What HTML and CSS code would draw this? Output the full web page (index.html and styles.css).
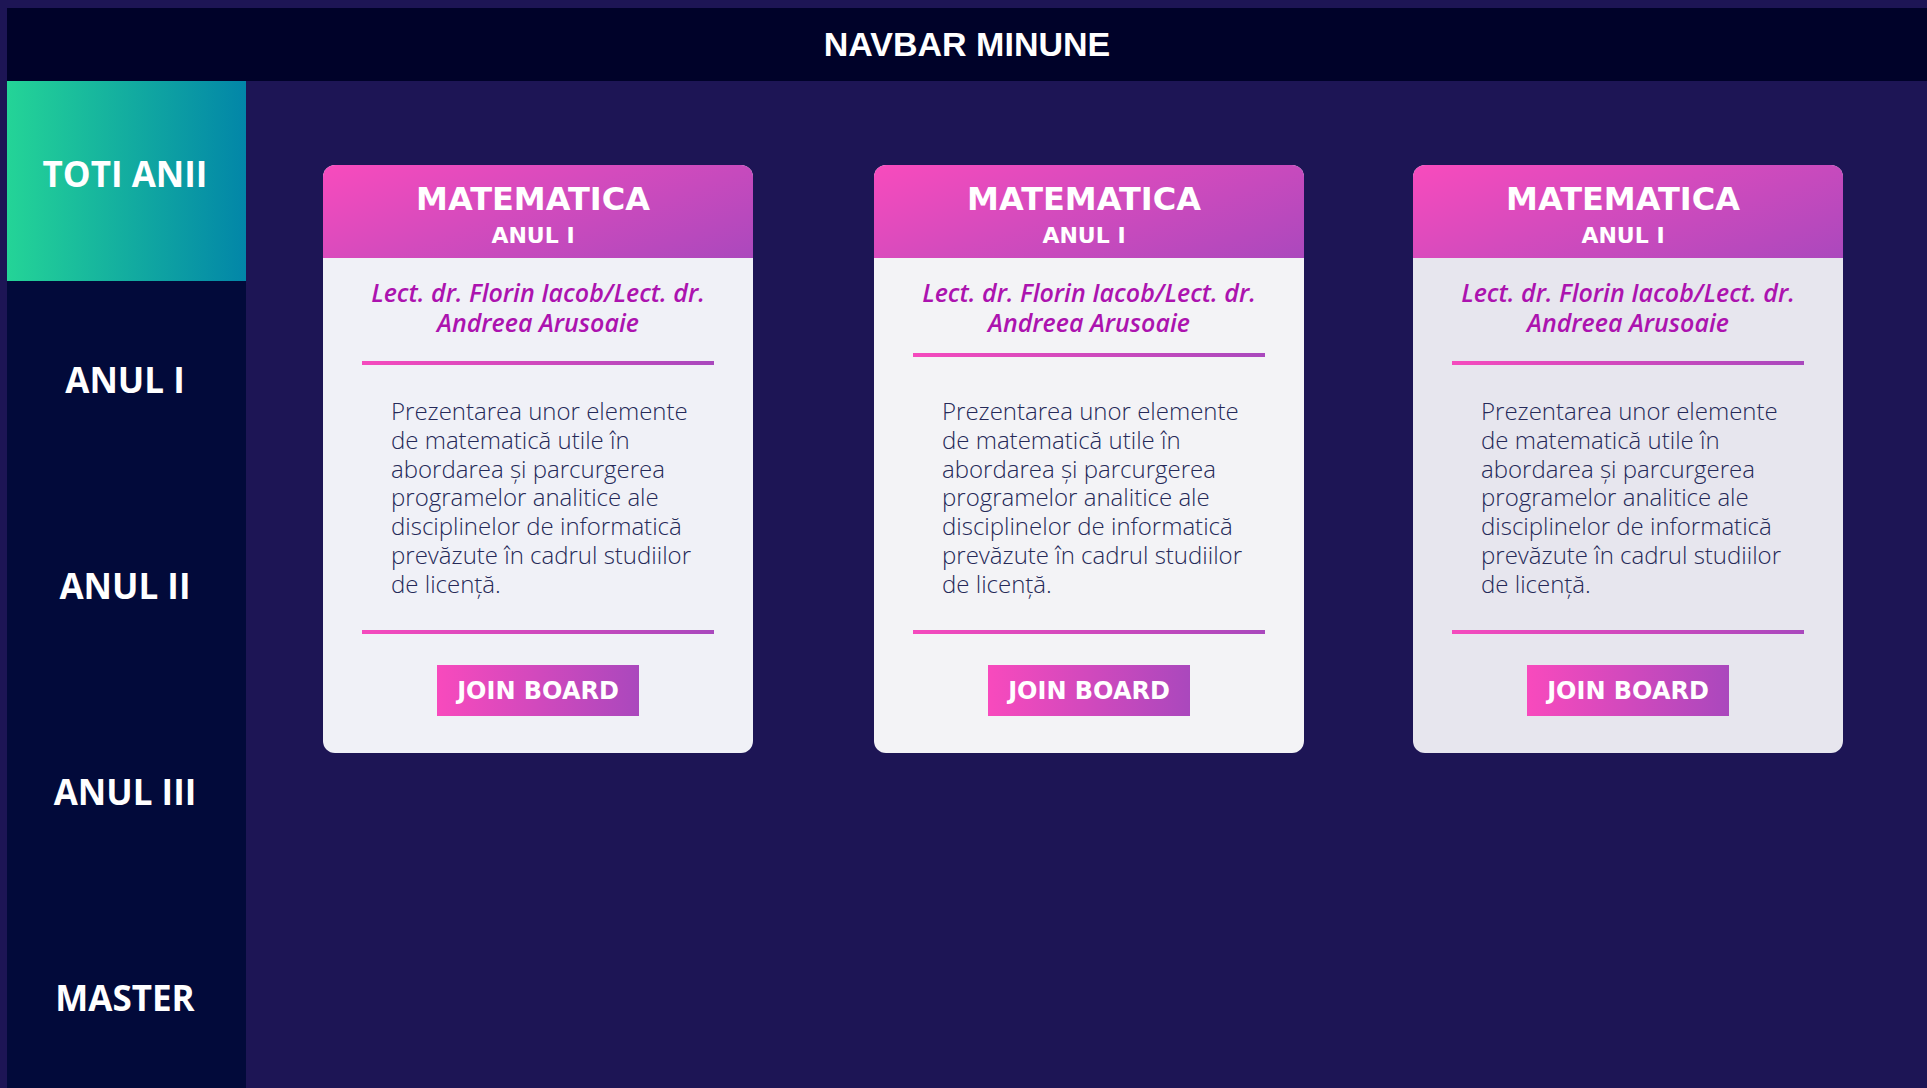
FILE: index.html
```html
<!DOCTYPE html>
<html lang="ro">
<head>
<meta charset="utf-8">
<title>Navbar Minune</title>
<link rel="stylesheet" href="styles.css">
</head>
<body>
<div class="page">
  <header class="navbar">NAVBAR MINUNE</header>
  <div class="layout">
    <nav class="sidebar">
      <a class="side-item active">TOTI ANII</a>
      <a class="side-item">ANUL I</a>
      <a class="side-item">ANUL II</a>
      <a class="side-item">ANUL III</a>
      <a class="side-item">MASTER</a>
    </nav>
    <main class="main">
      <article class="card card--light">
        <div class="card-head">
          <h2 class="card-title">MATEMATICA</h2>
          <h3 class="card-year">ANUL I</h3>
        </div>
        <p class="card-author">Lect. dr. Florin Iacob/Lect. dr. Andreea Arusoaie</p>
        <div class="divider divider--top"></div>
        <p class="card-desc">Prezentarea unor elemente de matematică utile în abordarea și parcurgerea programelor analitice ale disciplinelor de informatică prevăzute în cadrul studiilor de licență.</p>
        <div class="divider divider--bottom"></div>
        <button class="join-btn">JOIN BOARD</button>
      </article>
      <article class="card card--plain card--tight">
        <div class="card-head">
          <h2 class="card-title">MATEMATICA</h2>
          <h3 class="card-year">ANUL I</h3>
        </div>
        <p class="card-author">Lect. dr. Florin Iacob/Lect. dr. Andreea Arusoaie</p>
        <div class="divider divider--top"></div>
        <p class="card-desc">Prezentarea unor elemente de matematică utile în abordarea și parcurgerea programelor analitice ale disciplinelor de informatică prevăzute în cadrul studiilor de licență.</p>
        <div class="divider divider--bottom"></div>
        <button class="join-btn">JOIN BOARD</button>
      </article>
      <article class="card card--muted">
        <div class="card-head">
          <h2 class="card-title">MATEMATICA</h2>
          <h3 class="card-year">ANUL I</h3>
        </div>
        <p class="card-author">Lect. dr. Florin Iacob/Lect. dr. Andreea Arusoaie</p>
        <div class="divider divider--top"></div>
        <p class="card-desc">Prezentarea unor elemente de matematică utile în abordarea și parcurgerea programelor analitice ale disciplinelor de informatică prevăzute în cadrul studiilor de licență.</p>
        <div class="divider divider--bottom"></div>
        <button class="join-btn">JOIN BOARD</button>
      </article>
    </main>
  </div>
</div>
</body>
</html>
```

FILE: styles.css
```css
* {
  box-sizing: border-box;
}

html, body {
  margin: 0;
  padding: 0;
  background: #1d1555;
  overflow: hidden;
}

.page {
  padding: 8px 0 0 7px;
  height: 1088px;
  display: flex;
  flex-direction: column;
}

.navbar {
  height: 73px;
  flex: 0 0 73px;
  background: #000229;
  color: #ffffff;
  display: flex;
  align-items: center;
  justify-content: center;
  font-family: "Liberation Sans", Arial, sans-serif;
  font-weight: 700;
  font-size: 34px;
}

.layout {
  display: flex;
  flex: 1;
  min-height: 0;
}

.sidebar {
  width: 239px;
  flex: 0 0 239px;
  background: #020a3a;
  display: flex;
  flex-direction: column;
}

.side-item {
  height: 200px;
  flex: 0 0 200px;
  margin-bottom: 6px;
  padding: 0 3px 15px 0;
  display: flex;
  align-items: center;
  justify-content: center;
  color: #ffffff;
  font-family: "Open Sans", "Noto Sans", sans-serif;
  font-weight: 700;
  font-size: 35px;
  line-height: 1.2;
  text-decoration: none;
}

.side-item.active {
  background: linear-gradient(to right, #24d497, #0286a8);
}

.main {
  flex: 1;
  display: flex;
  align-items: flex-start;
  gap: 109px;
  padding: 84px 0 0 77px;
}

.card {
  width: 430px;
  flex: 0 0 430px;
  border-radius: 12px;
  overflow: hidden;
  display: flex;
  flex-direction: column;
  align-items: stretch;
}

.card--light {
  background: #f0f1f7;
}

.card--plain {
  background: #f3f3f6;
}

.card--muted {
  background: #e7e6ee;
}

.card--tight {
  margin-left: 12px;
}

.card-head {
  background: linear-gradient(160deg, #f84bbd 0%, #d44bbd 45%, #ab48bd 100%);
  color: #ffffff;
  text-align: center;
  padding: 18px 10px 11px 0;
  font-family: "DejaVu Sans", "Liberation Sans", sans-serif;
  font-weight: 700;
}

.card-title {
  margin: 0 0 10px;
  font-size: 32px;
  line-height: 32px;
  font-weight: 700;
}

.card-year {
  margin: 0;
  font-size: 22px;
  line-height: 22px;
  font-weight: 700;
}

.card-author {
  margin: 19px 0 0;
  padding: 0 26px;
  text-align: center;
  color: #ac13af;
  font-family: "Open Sans", "Noto Sans", sans-serif;
  font-style: italic;
  font-weight: 600;
  font-size: 25px;
  line-height: 30px;
}

.divider {
  height: 4px;
  margin: 0 39px;
  background: linear-gradient(to right, #f54abd, #a948bd);
}

.divider--top {
  margin-top: 24px;
}

.card--tight .divider--top {
  margin-top: 16px;
  margin-bottom: 8px;
}

.card-desc {
  margin: 32px 0 0;
  padding: 0 48px 0 68px;
  color: #252958;
  font-family: "Open Sans", "Noto Sans", sans-serif;
  font-weight: 300;
  font-size: 24px;
  line-height: 28.75px;
}

.divider--bottom {
  margin-top: 32px;
}

.join-btn {
  align-self: center;
  margin: 31px 0 37px;
  height: 51px;
  padding: 0 20px;
  border: none;
  border-radius: 0;
  background: linear-gradient(to right, #f84abd, #aa48bd);
  color: #ffffff;
  font-family: "DejaVu Sans", "Liberation Sans", sans-serif;
  font-weight: 700;
  font-size: 24px;
  cursor: pointer;
}
```
